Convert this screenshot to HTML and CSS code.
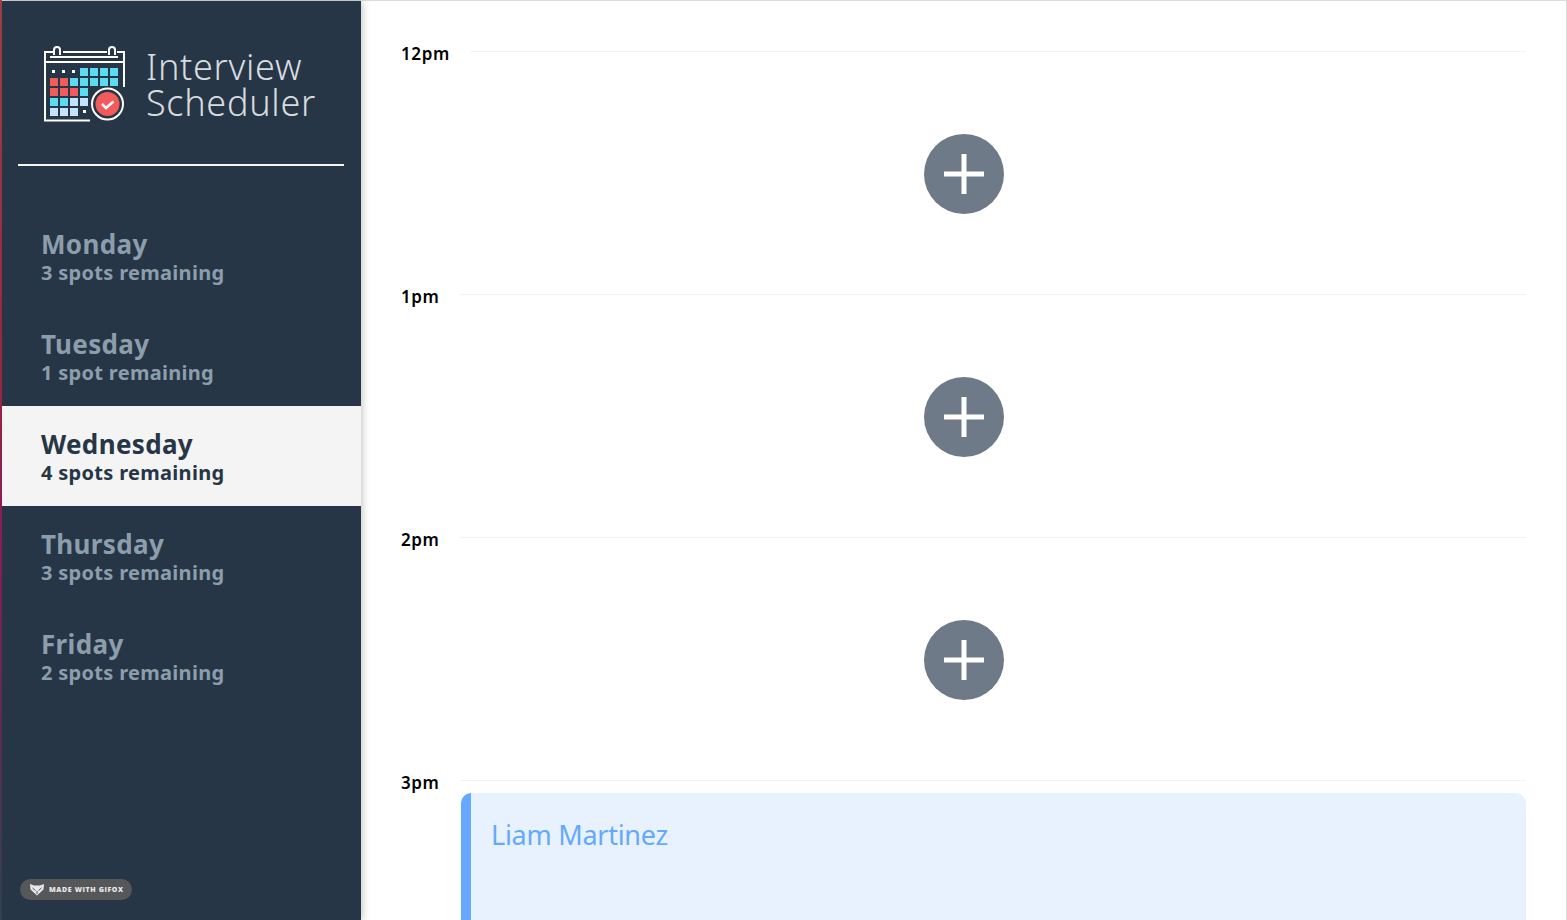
FILE: index.html
```html
<!DOCTYPE html>
<html lang="en">
<head>
  <meta charset="UTF-8" />
  <meta name="viewport" content="width=device-width, initial-scale=1.0" />
  <title>Interview Scheduler</title>
  <link rel="stylesheet" href="styles.css">
</head>
<body>
  <div id="layout">
    <nav id="sidebar">
      <div id="brand">
        <svg class="logo" width="82" height="76" viewBox="0 0 82 76">
          <g fill="none" stroke="#fff" stroke-width="2">
            <path d="M46 74.500H1V6H9M19 6H63M73 6H80V41"/>
            <path d="M1 16H80"/>
            <path d="M6 11H74"/>
            <path d="M10 9V4a3 3 0 0 1 6 0V9M65 9V4a3 3 0 0 1 6 0V9"/>
            <circle cx="63.500" cy="58" r="15.500"/>
          </g>
          <circle cx="63.500" cy="58" r="12" fill="#f15b5b"/>
          <path d="M58 58l4 4 7.500-6.500" fill="none" stroke="#fff" stroke-width="2.500"/>
          <g fill="#fff">
            <rect x="8" y="24" width="3" height="3"/>
            <rect x="18" y="24" width="3" height="3"/>
            <rect x="28" y="24" width="3" height="3"/>
            <rect x="39" y="64" width="3" height="3"/>
          </g>
          <g fill="#5cdcf2">
            <rect x="36" y="22" width="8" height="8"/>
            <rect x="46" y="22" width="8" height="8"/>
            <rect x="56" y="22" width="8" height="8"/>
            <rect x="66" y="22" width="8" height="8"/>
            <rect x="26" y="32" width="8" height="8"/>
            <rect x="36" y="32" width="8" height="8"/>
            <rect x="46" y="32" width="8" height="8"/>
            <rect x="56" y="32" width="8" height="8"/>
            <rect x="66" y="32" width="8" height="8"/>
            <rect x="36" y="42" width="8" height="8"/>
            <rect x="6" y="52" width="8" height="8"/>
            <rect x="16" y="52" width="8" height="8"/>
          </g>
          <g fill="#f15b5b">
            <rect x="6" y="32" width="8" height="8"/>
            <rect x="16" y="32" width="8" height="8"/>
            <rect x="6" y="42" width="8" height="8"/>
            <rect x="16" y="42" width="8" height="8"/>
            <rect x="26" y="42" width="8" height="8"/>
          </g>
          <g fill="#c5e3fd">
            <rect x="26" y="52" width="8" height="8"/>
            <rect x="36" y="52" width="8" height="8"/>
            <rect x="6" y="62" width="8" height="8"/>
            <rect x="16" y="62" width="8" height="8"/>
            <rect x="26" y="62" width="8" height="8"/>
          </g>
        </svg>
        <div id="brand-name">Interview<br>Scheduler</div>
      </div>
      <hr id="brand-rule">
      <ul id="days">
        <li class="day"><h2>Monday</h2><p>3 spots remaining</p></li>
        <li class="day"><h2>Tuesday</h2><p>1 spot remaining</p></li>
        <li class="day selected"><h2>Wednesday</h2><p>4 spots remaining</p></li>
        <li class="day"><h2>Thursday</h2><p>3 spots remaining</p></li>
        <li class="day"><h2>Friday</h2><p>2 spots remaining</p></li>
      </ul>
      <div id="gifox">
        <svg width="16" height="13" viewBox="0 0 16 13">
          <path d="M1 1l4 1.500h6L15 1l-.5 5.500L8 12.500 1.500 6.500z" fill="#e8e8e8"/>
          <path d="M3.500 5l3 2.500M12.500 5l-3 2.500M8 8v3" fill="none" stroke="#555759"/>
        </svg>
        <span>MADE WITH GIFOX</span>
      </div>
    </nav>

    <main id="schedule">
      <section class="slot">
        <div class="slot-head"><span class="time">12pm</span><hr></div>
        <div class="slot-body"><button class="add"><svg width="40" height="40" viewBox="0 0 40 40"><path d="M20 0V40M0 20H40" stroke="#fff" stroke-width="5"/></svg></button></div>
      </section>
      <section class="slot">
        <div class="slot-head"><span class="time">1pm</span><hr></div>
        <div class="slot-body"><button class="add"><svg width="40" height="40" viewBox="0 0 40 40"><path d="M20 0V40M0 20H40" stroke="#fff" stroke-width="5"/></svg></button></div>
      </section>
      <section class="slot">
        <div class="slot-head"><span class="time">2pm</span><hr></div>
        <div class="slot-body"><button class="add"><svg width="40" height="40" viewBox="0 0 40 40"><path d="M20 0V40M0 20H40" stroke="#fff" stroke-width="5"/></svg></button></div>
      </section>
      <section class="slot">
        <div class="slot-head"><span class="time">3pm</span><hr></div>
        <div class="booking"><h3>Liam Martinez</h3></div>
      </section>
    </main>
  </div>
</body>
</html>
```

FILE: styles.css
```css
* {
  box-sizing: border-box;
}
html, body {
  margin: 0;
  height: 100%;
  overflow: hidden;
}
body {
  font-family: "Noto Sans", sans-serif;
  background: linear-gradient(180deg, #a8454c 0%, #a82848 40%, #9c1f5c 55%, #6e2c5c 75%, #34465c 100%);
  padding-left: 2px;
}
#layout {
  display: flex;
  height: 100%;
  background: #fff;
  border-top: 1px solid #dcdcdc;
  border-right: 1px solid #dcdcdc;
}
#sidebar {
  width: 359px;
  flex-shrink: 0;
  background: #263646;
  box-shadow: 1px 0 8px rgba(0, 0, 0, 0.25);
  display: flex;
  flex-direction: column;
  position: relative;
  z-index: 1;
}
#brand {
  display: flex;
  align-items: center;
  gap: 20px;
  padding: 44px 0 0 42px;
  height: 125px;
}
.logo {
  margin-bottom: 3px;
}
#brand-name {
  color: #d8dbde;
  font-weight: 300;
  font-size: 36px;
  line-height: 36px;
  letter-spacing: 0.7px;
  margin-top: -2px;
}
#brand-rule {
  margin: 38px 17px 0 16px;
  border: none;
  border-top: 2px solid #f5f5f5;
}
#days {
  list-style: none;
  margin: 40px 0 0;
  padding: 0;
}
.day {
  height: 100px;
  padding: 22px 39px 0;
  color: #8c9dab;
}
.day h2 {
  margin: 0;
  font-size: 26px;
  line-height: 32px;
  font-weight: 700;
  letter-spacing: 0.35px;
}
.day p {
  margin: 0;
  font-size: 20px;
  line-height: 26px;
  font-weight: 700;
  letter-spacing: 0.3px;
}
.day.selected {
  background: #f4f4f4;
  color: #263646;
}
#gifox {
  position: absolute;
  left: 18px;
  bottom: 20px;
  width: 112px;
  height: 21px;
  border-radius: 11px;
  background: #555759;
  display: flex;
  align-items: center;
  gap: 4px;
  padding-left: 9px;
  color: #e8e8e8;
  font-family: "Open Sans", sans-serif;
  font-size: 7px;
  font-weight: 800;
  letter-spacing: 0.6px;
  white-space: nowrap;
}
#schedule {
  flex: 1;
  padding: 41px 40px 0 40px;
  overflow: hidden;
}
.slot {
  height: 243px;
}
.slot-head {
  display: flex;
  align-items: flex-start;
  gap: 20px;
  height: 22px;
}
.time {
  font-size: 17px;
  line-height: 24px;
  font-weight: 600;
  color: #000;
  letter-spacing: 0.6px;
}
.slot-head hr {
  flex: 1;
  margin: 9px 0 0;
  border: none;
  border-top: 1px solid #f3f3f3;
}
.slot-body {
  display: flex;
  justify-content: center;
  padding-top: 70px;
}
.add {
  width: 80px;
  height: 80px;
  padding: 0;
  border: none;
  border-radius: 50%;
  background: #6e7a87;
  display: flex;
  align-items: center;
  justify-content: center;
}
.booking {
  margin: 0 0 0 60px;
  height: 200px;
  background: #e8f2ff;
  border-left: 10px solid #64a9ff;
  border-radius: 10px;
  padding: 22px 20px;
}
.booking h3 {
  margin: 0;
  font-size: 27px;
  line-height: 40px;
  font-weight: 400;
  color: #64a9ff;
  letter-spacing: -0.27px;
}
```
